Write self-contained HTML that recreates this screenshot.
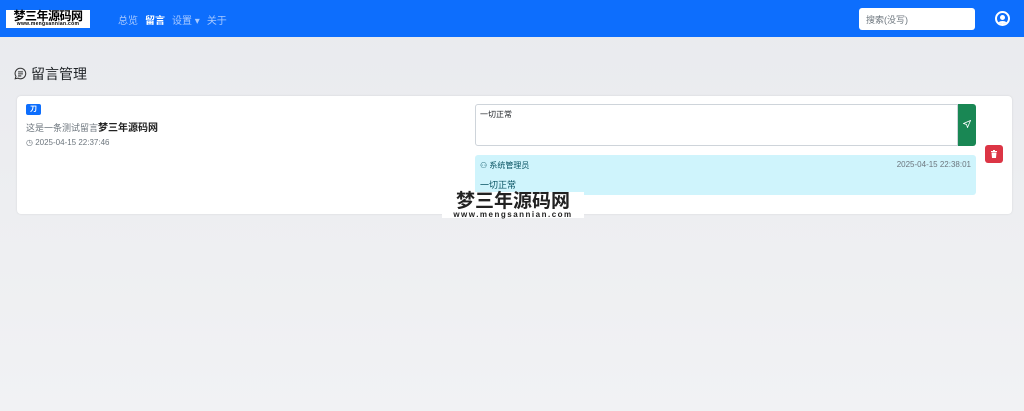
<!DOCTYPE html>
<html><head><meta charset="utf-8"><style>
*{box-sizing:border-box;margin:0;padding:0}
body{width:1024px;height:411px;overflow:hidden;font-family:"Liberation Sans","Noto Sans CJK SC",sans-serif;background:linear-gradient(180deg,#e9eaee 0%,#f1f2f4 100%);position:relative;font-size:9px}
.nav{position:absolute;left:0;top:0;width:1024px;height:37px;background:#0d6efd}
.logo{position:absolute;left:6px;top:10px;width:84px;height:18px;background:#fff;text-align:center;color:#000;line-height:1}
.logo b{display:block;font-size:12px;font-weight:bold;letter-spacing:-0.5px}
.logo i{display:block;font-size:5px;font-style:normal;font-weight:bold;letter-spacing:0.3px}
.links{position:absolute;left:118px;top:12px;color:#a8c9fe;font-size:10px}
.links span{margin-right:7px}
.search{position:absolute;left:859px;top:8px;width:116px;height:22px;background:#fff;border-radius:3px;color:#6c757d;font-size:9px;padding:5px 7px}
.user{position:absolute;left:995px;top:11px;width:15px;height:15px;border:2px solid #fff;border-radius:50%;overflow:hidden}
h1{position:absolute;left:31px;top:64px;font-size:14px;font-weight:normal;color:#212529}
.card{position:absolute;left:17px;top:96px;width:995px;height:118px;background:#fff;border-radius:4px;box-shadow:0 0 2px rgba(0,0,0,.1)}
.badge{position:absolute;left:9px;top:8px;width:15px;height:11px;background:#0d6efd;border-radius:2px;color:#fff;font-size:7px;text-align:center;line-height:11px;font-weight:bold}
.msg{position:absolute;left:9px;top:23px;color:#6c757d;font-size:9px}
.time{position:absolute;left:9px;top:42px;color:#6c757d;font-size:8px}
.ta{position:absolute;left:458px;top:8px;width:483px;height:42px;border:1px solid #ced4da;border-radius:3px 0 0 3px;padding:4px;font-size:8px;color:#212529}
.send{position:absolute;left:941px;top:8px;width:18px;height:42px;background:#198754;border-radius:0 3px 3px 0}
.del{position:absolute;left:968px;top:49px;width:18px;height:18px;background:#dc3545;border-radius:3px}
.reply{position:absolute;left:458px;top:59px;width:501px;height:40px;background:#cff4fc;border-radius:3px;color:#055160}
.wm{position:absolute;left:442px;top:192px;width:142px;height:26px;background:#fff;text-align:center;color:#222;line-height:1}
.wm b{display:block;font-size:19px;font-weight:bold;letter-spacing:0px}
.wm i{display:block;font-size:8px;font-style:normal;font-weight:bold;letter-spacing:1.5px}
</style></head><body>
<div class="nav">
<div class="logo"><b>梦三年源码网</b><i>www.mengsannian.com</i></div>
<div class="links"><span>总览</span><span style="color:#fff;font-weight:bold">留言</span><span>设置 ▾</span><span>关于</span></div>
<div class="search">搜索(没写)</div>
<div class="user"><div style="width:5px;height:5px;border-radius:50%;background:#fff;margin:2px auto 0"></div><div style="width:11px;height:8px;border-radius:50%;background:#fff;margin:1px auto 0"></div></div>
</div>
<svg style="position:absolute;left:14px;top:67px" width="13" height="13" viewBox="0 0 16 16" fill="none" stroke="#333" stroke-width="1.3"><path d="M8 1.5a6.5 6.5 0 1 1-3.2 12.2L1.5 14.5l.9-3A6.5 6.5 0 0 1 8 1.5z"/><path d="M5 6h6M5 8.5h6M5 11h4"/></svg>
<h1>留言管理</h1>
<div class="card">
<div class="badge">刀</div>
<div class="msg">这是一条测试留言<span style="color:#222;font-weight:bold;font-size:10px">梦三年源码网</span></div>
<div class="time">◷ 2025-04-15 22:37:46</div>
<div class="ta">一切正常</div>
<div class="send"><svg style="margin:16px 0 0 5px" width="8" height="8" viewBox="0 0 16 16" fill="none" stroke="#fff" stroke-width="1.6"><path d="M15 1L1 7l6 2 2 6z"/></svg></div>
<div class="del"><svg style="margin:5px 0 0 5px" width="8" height="8" viewBox="0 0 16 16" fill="#fff"><path d="M2 2h12v2H2zM6 0h4v2H6zM3 5h10l-1 11H4z"/></svg></div>
<div class="reply">
<div style="position:absolute;left:5px;top:5px;font-size:8px">⚇ 系统管理员</div>
<div style="position:absolute;right:5px;top:5px;font-size:8px;color:#6c757d">2025-04-15 22:38:01</div>
<div style="position:absolute;left:5px;top:23px;font-size:9px">一切正常</div>
</div>
</div>
<div class="wm"><b>梦三年源码网</b><i>www.mengsannian.com</i></div>
</body></html>
